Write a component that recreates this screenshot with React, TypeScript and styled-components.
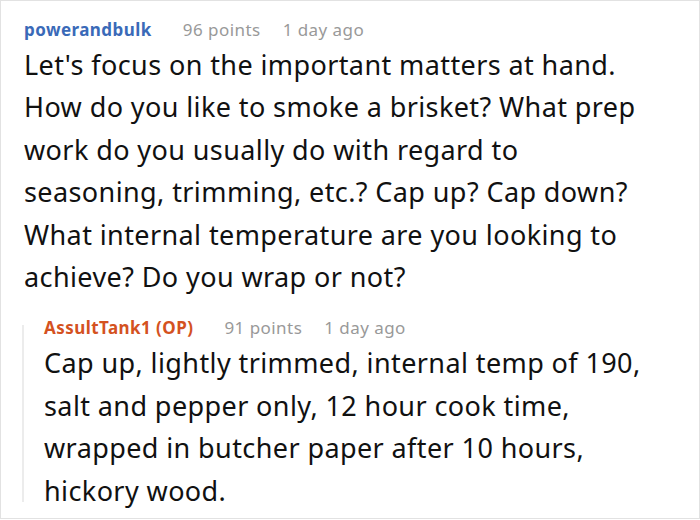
import styled, { createGlobalStyle } from "styled-components";

const Global = createGlobalStyle`
  html, body {
    margin: 0;
    padding: 0;
    background: #fff;
  }
`;

const Frame = styled.div`
  box-sizing: border-box;
  width: 700px;
  height: 519px;
  border: 1px solid #e2e2e2;
  padding: 15px 0 0 23px;
  font-family: "Noto Sans", "Open Sans", sans-serif;
  overflow: hidden;
`;

const Thread = styled.div`
  width: 625px;
`;

const Comment = styled.div`
  flex: 1;
  min-width: 0;
  display: flex;
  flex-direction: column;
`;

const Reply = styled.div`
  display: flex;
  margin-top: 16px;
  margin-left: -2px;
  gap: 20px;
`;

const Rail = styled.div`
  flex: 0 0 2px;
  margin: 11px 0 10px;
  background: #ececec;
`;

const Meta = styled.div`
  display: flex;
  align-items: baseline;
  font-size: 17px;
  letter-spacing: 0.45px;
  line-height: 28px;
`;

const Author = styled.span<{ $op?: boolean }>`
  font-weight: 700;
  color: ${(p) => (p.$op ? "#d4521f" : "#3a6ab8")};
`;

const Info = styled.span<{ $gap: number }>`
  margin-left: ${(p) => p.$gap}px;
  color: #999;
`;

const Body = styled.p`
  margin: 0;
  font-size: 27px;
  letter-spacing: 0.4px;
  line-height: 42.4px;
  color: #111;
`;

export default function App() {
  return (
    <>
      <Global />
      <Frame>
        <Thread>
          <Comment>
            <Meta>
              <Author>powerandbulk</Author>
              <Info $gap={31}>96 points</Info>
              <Info $gap={22}>1 day ago</Info>
            </Meta>
            <Body>
              Let's focus on the important matters at hand. How do you like to
              smoke a brisket? What prep work do you usually do with regard to
              seasoning, trimming, etc.? Cap up? Cap down? What internal
              temperature are you looking to achieve? Do you wrap or not?
            </Body>
            <Reply>
              <Rail />
              <Comment>
                <Meta>
                  <Author $op>AssultTank1 (OP)</Author>
                  <Info $gap={31}>91 points</Info>
                  <Info $gap={22}>1 day ago</Info>
                </Meta>
                <Body>
                  Cap up, lightly trimmed, internal temp of 190, salt and
                  pepper only, 12 hour cook time, wrapped in butcher paper
                  after 10 hours, hickory wood.
                </Body>
              </Comment>
            </Reply>
          </Comment>
        </Thread>
      </Frame>
    </>
  );
}
